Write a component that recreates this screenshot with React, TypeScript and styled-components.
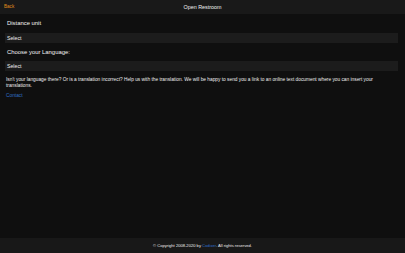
import React from 'react';
import styled, { createGlobalStyle } from 'styled-components';

const GlobalStyle = createGlobalStyle`
  html, body {
    margin: 0;
    padding: 0;
    background: #0f0f0f;
  }
  body {
    font-family: "Liberation Sans", Arial, sans-serif;
    color: #f2f2f2;
    -webkit-font-smoothing: antialiased;
  }
`;

const App: React.FC = () => {
  return (
    <Page>
      <GlobalStyle />
      <Header>
        <BackLink>Back</BackLink>
        <Title>Open Restroom</Title>
      </Header>

      <Content>
        <Label>Distance unit</Label>
        <SelectRow>Select</SelectRow>

        <Label>Choose your Language:</Label>
        <SelectRow>Select</SelectRow>

        <Note>
          Isn't your language there? Or is a translation incorrect? Help us with the translation. We will be happy to send
          you a link to an online text document where you can insert your translations.
        </Note>
        <ContactLink>Contact</ContactLink>
      </Content>

      <Footer>
        © Copyright 2008-2020 by <FooterLink>Codixer</FooterLink>. All rights reserved.
      </Footer>
    </Page>
  );
};

export default App;

// Styled Components
const Page = styled.div`
  display: flex;
  flex-direction: column;
  height: 253px;
  background: #0f0f0f;
`;

const Header = styled.div`
  position: relative;
  display: flex;
  align-items: center;
  justify-content: center;
  height: 14px;
  background: #191919;
  flex-shrink: 0;
`;

const BackLink = styled.span`
  position: absolute;
  left: 4px;
  top: 0;
  line-height: 14px;
  font-size: 4.6px;
  color: #e08c1c;
`;

const Title = styled.span`
  font-size: 5.4px;
  color: #f2f2f2;
`;

const Content = styled.div`
  flex: 1;
  display: flex;
  flex-direction: column;
  padding: 0 6px;
`;

const Label = styled.div`
  font-size: 5.9px;
  line-height: 9px;
  padding: 5px 1px 4.5px;
  color: #f4f4f4;
`;

const SelectRow = styled.div`
  height: 10px;
  line-height: 10px;
  font-size: 5.2px;
  background: #1c1c1c;
  color: #f0f0f0;
  margin: 0 1px 0 -1px;
  padding-left: 2px;
`;

const Note = styled.p`
  margin: 5.5px 0 0;
  font-size: 4.8px;
  line-height: 6px;
  color: #eeeeee;
`;

const ContactLink = styled.a`
  margin-top: 4px;
  font-size: 4.8px;
  color: #2f6fc8;
  cursor: pointer;
`;

const Footer = styled.div`
  height: 15px;
  flex-shrink: 0;
  line-height: 15px;
  text-align: center;
  font-size: 4.1px;
  background: #181818;
  color: #eeeeee;
`;

const FooterLink = styled.span`
  color: #2f6fc8;
`;
